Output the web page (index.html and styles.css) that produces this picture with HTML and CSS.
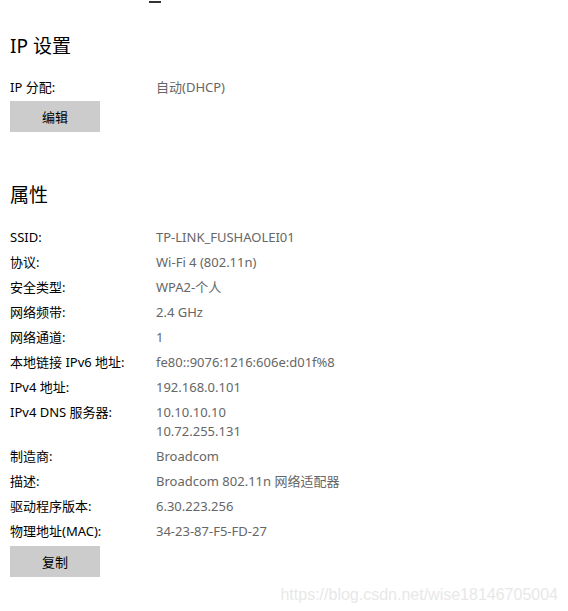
FILE: index.html
```html
<!DOCTYPE html>
<html lang="zh-CN">
<head>
<meta charset="utf-8">
<link rel="stylesheet" href="styles.css">
</head>
<body>
<div class="page">
  <div class="topmark"></div>
  <section class="sec sec-ip">
    <h2 class="title">IP 设置</h2>
    <div class="rows">
      <div class="row"><span class="label">IP 分配:</span><span class="value">自动(DHCP)</span></div>
    </div>
    <button class="btn">编辑</button>
  </section>
  <section class="sec sec-props">
    <h2 class="title">属性</h2>
    <div class="rows">
      <div class="row"><span class="label">SSID:</span><span class="value">TP-LINK_FUSHAOLEI01</span></div>
      <div class="row"><span class="label">协议:</span><span class="value">Wi-Fi 4 (802.11n)</span></div>
      <div class="row"><span class="label">安全类型:</span><span class="value">WPA2-个人</span></div>
      <div class="row"><span class="label">网络频带:</span><span class="value">2.4 GHz</span></div>
      <div class="row"><span class="label">网络通道:</span><span class="value">1</span></div>
      <div class="row"><span class="label">本地链接 IPv6 地址:</span><span class="value">fe80::9076:1216:606e:d01f%8</span></div>
      <div class="row"><span class="label">IPv4 地址:</span><span class="value">192.168.0.101</span></div>
      <div class="row multi"><span class="label">IPv4 DNS 服务器:</span><span class="value">10.10.10.10<br>10.72.255.131</span></div>
      <div class="row"><span class="label">制造商:</span><span class="value">Broadcom</span></div>
      <div class="row"><span class="label">描述:</span><span class="value">Broadcom 802.11n 网络适配器</span></div>
      <div class="row"><span class="label">驱动程序版本:</span><span class="value">6.30.223.256</span></div>
      <div class="row"><span class="label">物理地址(MAC):</span><span class="value">34-23-87-F5-FD-27</span></div>
    </div>
    <button class="btn btn-copy">复制</button>
  </section>
  <div class="watermark">https://blog.csdn.net/wise18146705004</div>
</div>
</body>
</html>
```
FILE: styles.css
```css
html, body {
  margin: 0;
  padding: 0;
  background: #ffffff;
}
.page {
  position: relative;
  width: 568px;
  height: 611px;
  overflow: hidden;
  padding-left: 10px;
  box-sizing: border-box;
  font-family: "Noto Sans", "Noto Sans CJK SC", sans-serif;
  color: #000;
}
.topmark {
  position: absolute;
  left: 149px;
  top: 1px;
  width: 12px;
  height: 2px;
  background: #333;
}
.sec-ip {
  padding-top: 32px;
}
.sec-props {
  padding-top: 49px;
}
.title {
  margin: 0;
  font-weight: normal;
  font-size: 19px;
  line-height: 28px;
  height: 28px;
}
.rows {
  display: flex;
  flex-direction: column;
}
.sec-ip .rows { margin-top: 15px; }
.sec-props .rows { margin-top: 16px; }
.row {
  display: grid;
  grid-template-columns: 146px 1fr;
  height: 25px;
  align-items: center;
  font-size: 13px;
  line-height: 19px;
}
.row.multi {
  height: 44px;
  align-items: start;
  padding-top: 3px;
  box-sizing: border-box;
}
.label { color: #000; }
.value { color: #666666; }
.btn {
  display: block;
  width: 90px;
  height: 31px;
  margin-top: 1px;
  border: none;
  background: #cccccc;
  font-family: "Noto Sans CJK SC", sans-serif;
  font-size: 13px;
  color: #000;
  padding: 0;
}
.btn-copy {
  margin-top: 2px;
}
.watermark {
  position: absolute;
  right: 10px;
  top: 586px;
  font-family: "Liberation Sans", sans-serif;
  font-size: 16px;
  line-height: 18px;
  color: #e8e8e8;
}
```
